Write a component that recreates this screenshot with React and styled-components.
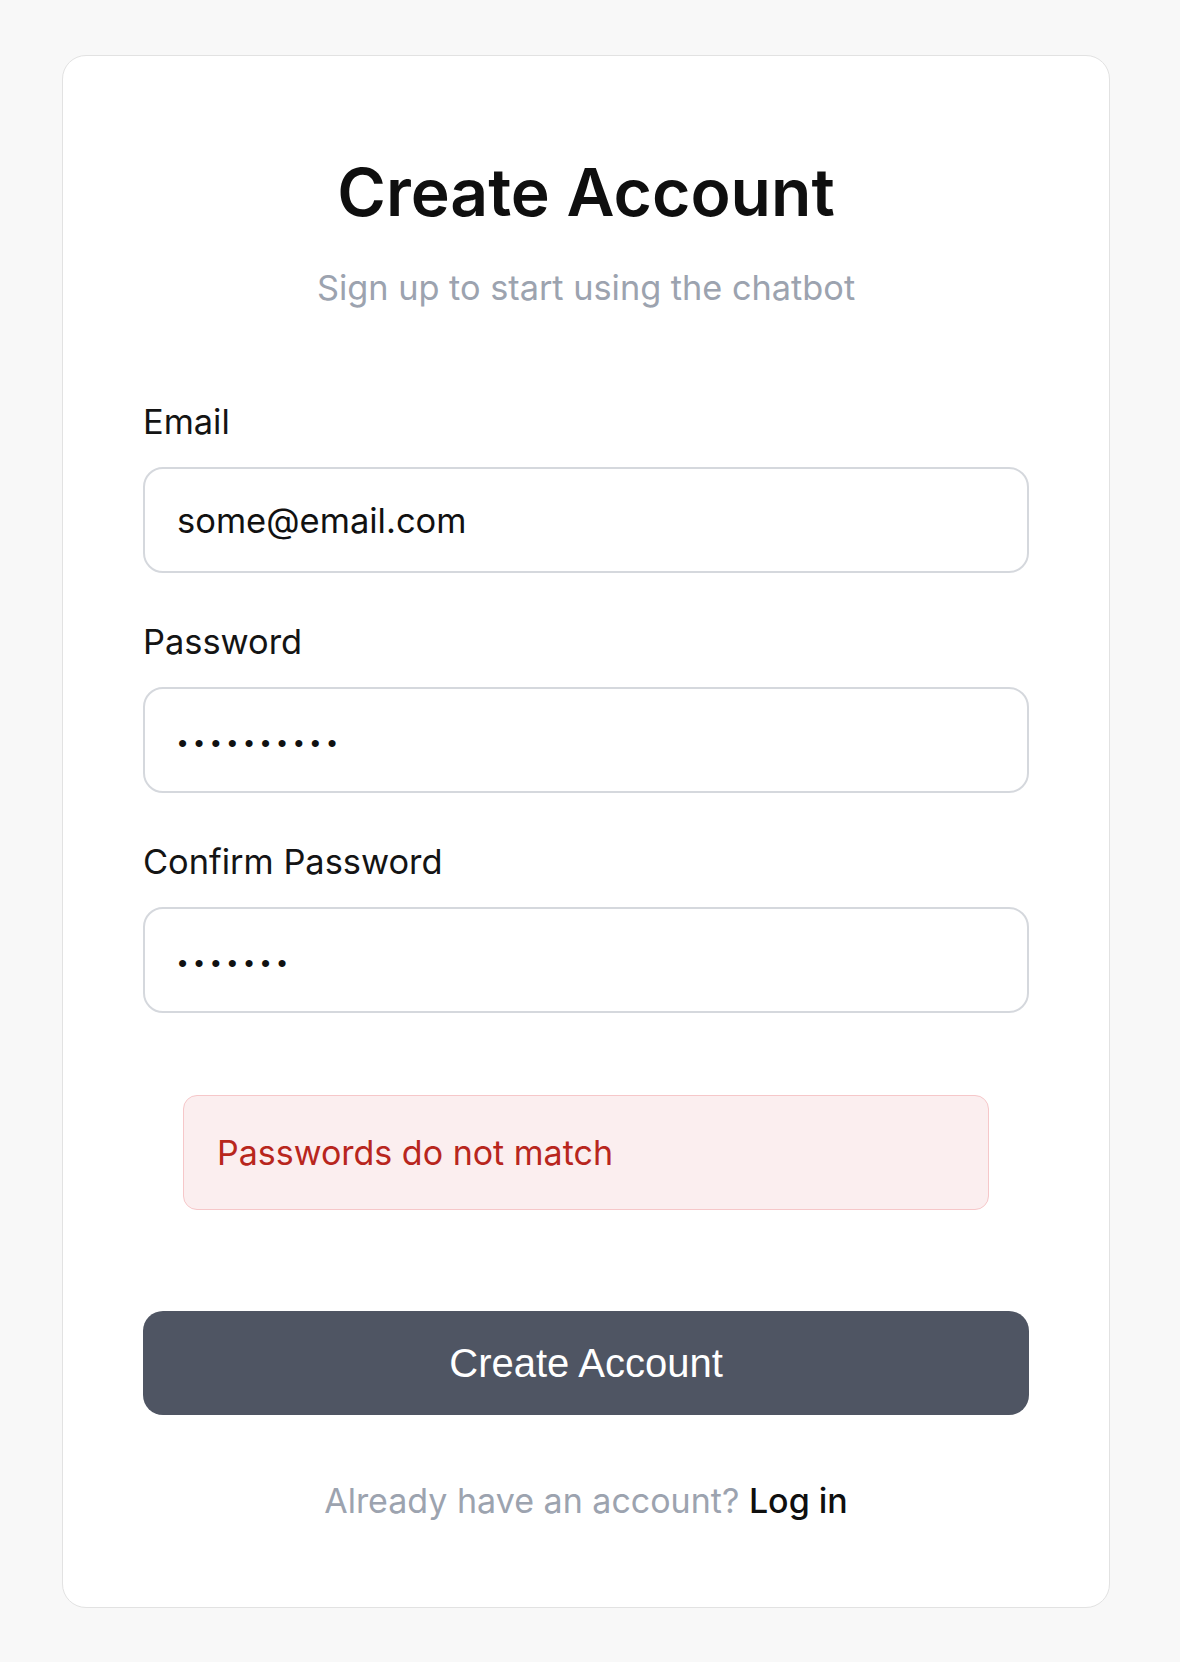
import React from 'react';
import styled, { createGlobalStyle } from 'styled-components';

const GlobalStyle = createGlobalStyle`
  body {
    margin: 0;
    background: #f8f8f8;
    font-family: Inter, "Noto Sans", sans-serif;
    color: #111;
  }
`;

const Page = styled.div`
  padding: 55px 0 55px 62px;
`;

const Card = styled.div`
  box-sizing: border-box;
  width: 1048px;
  background: #fff;
  border: 1.5px solid #e2e2e2;
  border-radius: 24px;
  padding: 96px 80px 86px;
`;

const Title = styled.h1`
  margin: 0;
  text-align: center;
  font-size: 66px;
  line-height: 80px;
  font-weight: 600;
  color: #0f0f0f;
`;

const Subtitle = styled.p`
  margin: 36px 0 0;
  text-align: center;
  font-size: 34.3px;
  line-height: 40px;
  color: #9ca3af;
`;

const Form = styled.form`
  margin-top: 94px;
  display: flex;
  flex-direction: column;
`;

const Field = styled.div`
  display: flex;
  flex-direction: column;
  gap: 25px;
  margin-bottom: 49px;
`;

const Label = styled.label`
  font-size: 34.4px;
  line-height: 40px;
  color: #141414;
`;

const Input = styled.input`
  box-sizing: border-box;
  height: 106px;
  width: 100%;
  padding: 0 32px;
  border: 2px solid #d5d8dd;
  border-radius: 20px;
  font-family: Inter, "Noto Sans", sans-serif;
  font-size: 34.5px;
  color: #111;
  outline: none;
`;

const SecretInput = styled(Input)`
  padding: 6px 33px 0;
  font-family: "Liberation Sans", Arial, sans-serif;
  font-size: 26px;
  letter-spacing: 7.5px;
`;

const ErrorBox = styled.div`
  margin: 33px 40px 0;
  height: 115px;
  box-sizing: border-box;
  display: flex;
  align-items: center;
  padding: 0 33px;
  background: #fbeeef;
  border: 1.5px solid #f6c7c9;
  border-radius: 14px;
  font-size: 34px;
  color: #b8261d;
`;

const SubmitButton = styled.button`
  margin-top: 101px;
  height: 104px;
  border: none;
  border-radius: 20px;
  background: #4f5563;
  color: #fff;
  font-family: "Liberation Sans", Arial, sans-serif;
  font-size: 40px;
`;

const Footer = styled.p`
  margin: 66px 0 0;
  text-align: center;
  font-size: 34px;
  line-height: 40px;
  color: #9ca3af;
`;

const LoginLink = styled.a`
  color: #0f0f0f;
  font-weight: 500;
  text-decoration: none;
`;

export default function App() {
  return (
    <>
      <GlobalStyle />
      <Page>
        <Card>
          <Title>Create Account</Title>
          <Subtitle>Sign up to start using the chatbot</Subtitle>
          <Form onSubmit={(e) => e.preventDefault()}>
            <Field>
              <Label>Email</Label>
              <Input type="email" defaultValue="some@email.com" />
            </Field>
            <Field>
              <Label>Password</Label>
              <SecretInput type="password" defaultValue="abcdefghij" />
            </Field>
            <Field>
              <Label>Confirm Password</Label>
              <SecretInput type="password" defaultValue="abcdefg" />
            </Field>
            <ErrorBox>Passwords do not match</ErrorBox>
            <SubmitButton type="submit">Create Account</SubmitButton>
          </Form>
          <Footer>
            Already have an account? <LoginLink href="#">Log in</LoginLink>
          </Footer>
        </Card>
      </Page>
    </>
  );
}
